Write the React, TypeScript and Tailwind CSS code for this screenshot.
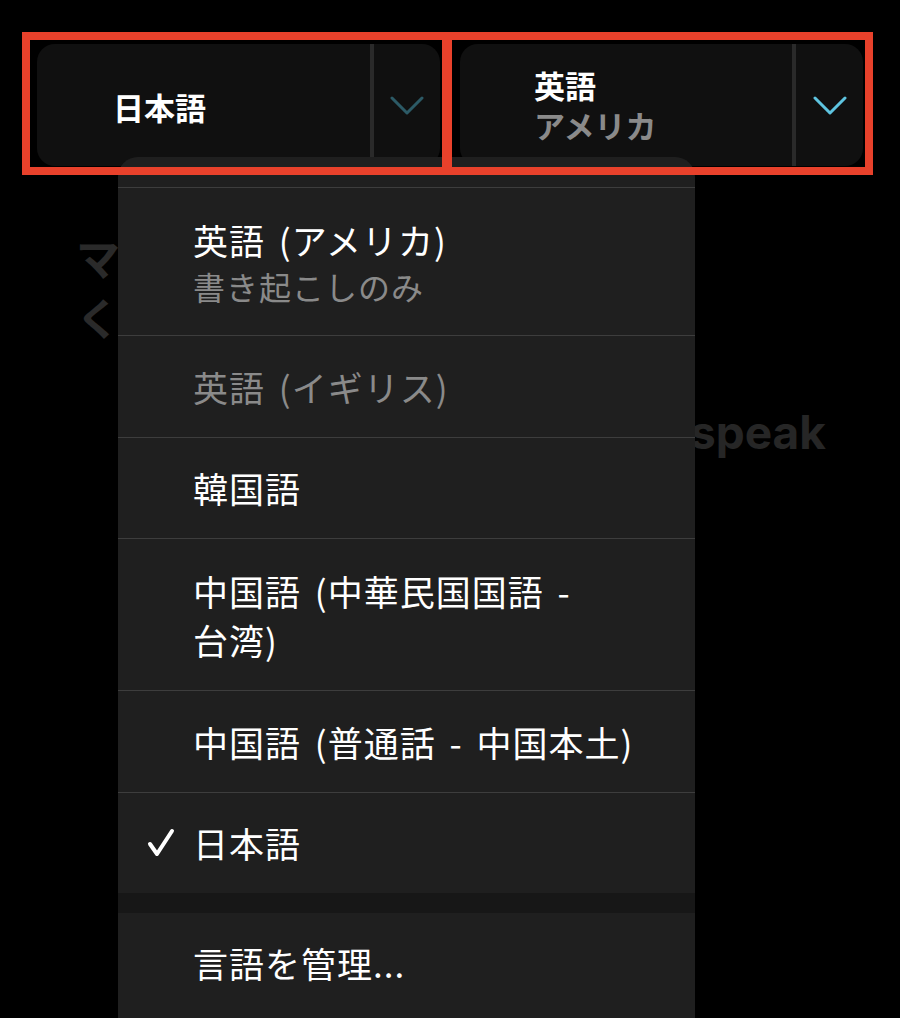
import React from "react";

function Chevron({ color }: { color: string }) {
  return (
    <svg width="34" height="20" viewBox="0 0 34 20" fill="none">
      <polyline points="2,2 17,17 32,2" stroke={color} strokeWidth="3" strokeLinecap="round" strokeLinejoin="round" />
    </svg>
  );
}

function Check() {
  return (
    <svg width="28" height="30" viewBox="0 0 28 30" fill="none">
      <polyline points="3,16 10,26 25,3" stroke="#ffffff" strokeWidth="4" strokeLinecap="round" strokeLinejoin="round" />
    </svg>
  );
}

function Item({
  h,
  children,
  check,
  border = true,
}: {
  h: string;
  children: React.ReactNode;
  check?: boolean;
  border?: boolean;
}) {
  return (
    <div className={`flex items-center ${h} ${border ? "border-t border-[#3d3d3d]" : ""}`}>
      <div className="flex w-[75px] shrink-0 justify-end pr-[18px]">{check ? <Check /> : null}</div>
      <div className="flex flex-col">{children}</div>
    </div>
  );
}

export default function App() {
  return (
    <div className="relative h-[1018px] w-[900px] overflow-hidden bg-black font-['Noto_Sans_CJK_JP',sans-serif] text-white">
      {/* top selector buttons */}
      <div className="flex gap-[20px] pl-[37px] pt-[44px]">
        <div className="flex h-[122px] w-[403px] overflow-hidden rounded-[18px] bg-[#101010]">
          <div className="flex flex-1 items-center pl-[76px] pt-[4px] text-[31px] font-bold leading-[40px]">日本語</div>
          <div className="w-[4px] bg-[#2a2a2a]" />
          <div className="flex w-[66px] items-center justify-center pt-[2px]">
            <Chevron color="#2c5a66" />
          </div>
        </div>
        <div className="flex h-[122px] w-[403px] overflow-hidden rounded-[18px] bg-[#101010]">
          <div className="flex flex-1 flex-col justify-center pl-[74px] text-[31px] font-bold leading-[40px]">
            <span className="text-white">英語</span>
            <span className="text-[#8a8a8a]">アメリカ</span>
          </div>
          <div className="w-[4px] bg-[#2a2a2a]" />
          <div className="flex w-[67px] items-center justify-center pt-[2px]">
            <Chevron color="#5ec4e0" />
          </div>
        </div>
      </div>

      {/* background content (partially hidden) */}
      <div className="mt-[61px] pl-[76px] text-[44px] font-bold leading-[60px] text-[#2a2a2a]">
        <div>マ</div>
        <div>く</div>
      </div>
      <div className="mt-[57px] pl-[690px] font-['Inter',sans-serif] text-[46px] font-bold leading-[56px] text-[#262626]">
        speak
      </div>

      {/* dropdown menu */}
      <div className="absolute left-[118px] top-[157px] w-[577px] rounded-t-[20px] bg-[#1f1f1f] text-[35px] tracking-[1px] [word-spacing:5px]">
        <div className="h-[30px]" />
        <Item h="h-[148px]">
          <span className="pt-[3px] leading-[47px] text-white">英語 (アメリカ)</span>
          <span className="text-[32px] leading-[47px] text-[#8a8a8a]">書き起こしのみ</span>
        </Item>
        <Item h="h-[102px]">
          <span className="leading-[46px] text-[#8a8a8a]">英語 (イギリス)</span>
        </Item>
        <Item h="h-[101px]">
          <span className="leading-[46px]">韓国語</span>
        </Item>
        <Item h="h-[152px]">
          <span className="whitespace-nowrap leading-[49px]">
            中国語 (中華民国国語 -
            <br />
            台湾)
          </span>
        </Item>
        <Item h="h-[102px]">
          <span className="whitespace-nowrap leading-[46px]">中国語 (普通話 - 中国本土)</span>
        </Item>
        <Item h="h-[101px]" check>
          <span className="leading-[46px]">日本語</span>
        </Item>
        <div className="h-[20px] bg-[#171717]" />
        <Item h="h-[110px]" border={false}>
          <span className="pb-[10px] leading-[46px]">言語を管理...</span>
        </Item>
      </div>

      {/* red annotation boxes */}
      <div className="pointer-events-none absolute left-[22px] top-[32px] h-[143px] w-[428px] border-[8px] border-[#e8412b]" />
      <div className="pointer-events-none absolute left-[444px] top-[32px] h-[143px] w-[429px] border-[8px] border-[#e8412b]" />
    </div>
  );
}
